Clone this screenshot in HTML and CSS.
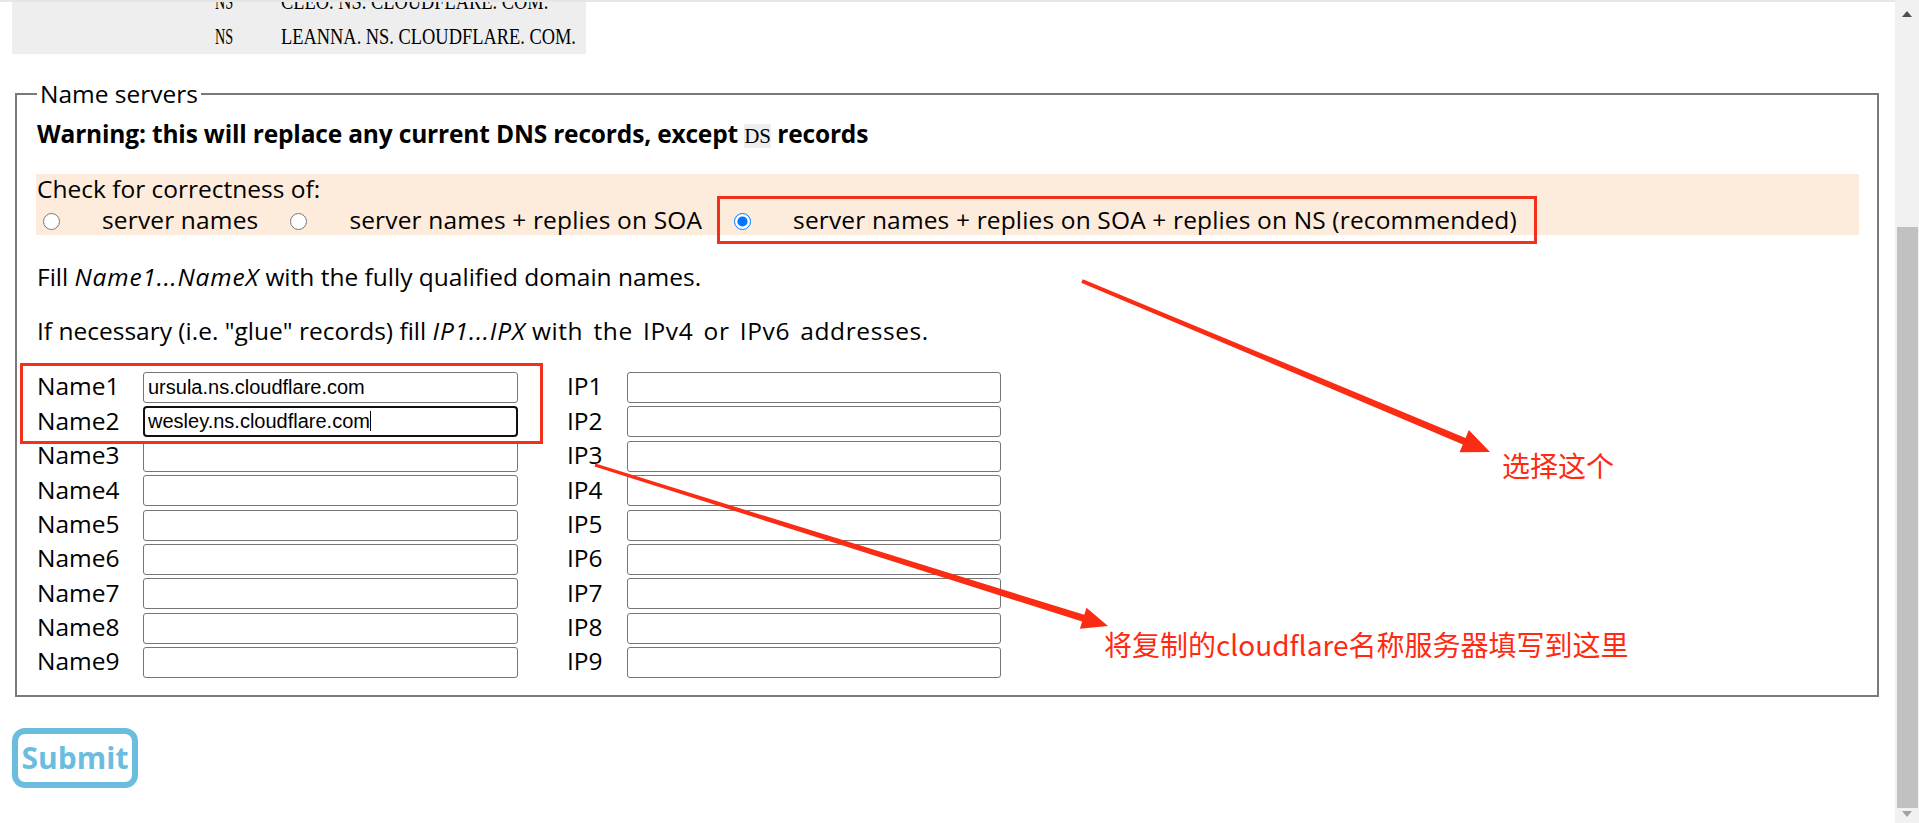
FILE: index.html
```html
<!DOCTYPE html>
<html lang="en">
<head>
<meta charset="utf-8">
<title>Name servers</title>
<link rel="stylesheet" href="styles.css">
</head>
<body>
<div class="topline"></div>
<div class="page">
  <div class="pre">
    <div class="pre-inner">
      <div class="pre-line"><span class="rr">NS</span><span class="rv">CLEO. NS. CLOUDFLARE. COM.</span></div>
      <div class="pre-line"><span class="rr">NS</span><span class="rv">LEANNA. NS. CLOUDFLARE. COM.</span></div>
    </div>
  </div>
  <form class="ns-form">
    <fieldset class="ns">
      <legend>Name servers</legend>
      <p class="warn">Warning: this will replace any current DNS records, except <code class="code">DS</code> records</p>
      <div class="check">
        <div>Check for correctness of:</div>
        <div class="radios">
          <input class="radio first" type="radio" name="check"><span>server names</span>
          <input class="radio" type="radio" name="check"><span>server names + replies on SOA</span>
          <input class="radio" type="radio" name="check" checked><span>server names + replies on SOA + replies on NS (recommended)</span>
        </div>
      </div>
      <p class="fill">Fill <em>Name1...NameX</em> with the fully qualified domain names.</p>
      <p class="glue">If necessary (i.e. "glue" records) fill <em>IP1...IPX</em> <span class="tail">with the IPv4 or IPv6 addresses.</span></p>
      <div class="rows">
        <div class="row"><span class="lbl">Name1</span><input class="field" value="ursula.ns.cloudflare.com"><span class="lbl ip">IP1</span><input class="field ipf"></div>
        <div class="row"><span class="lbl">Name2</span><input class="field focus" value="wesley.ns.cloudflare.com"><span class="lbl ip">IP2</span><input class="field ipf"></div>
        <div class="row"><span class="lbl">Name3</span><input class="field"><span class="lbl ip">IP3</span><input class="field ipf"></div>
        <div class="row"><span class="lbl">Name4</span><input class="field"><span class="lbl ip">IP4</span><input class="field ipf"></div>
        <div class="row"><span class="lbl">Name5</span><input class="field"><span class="lbl ip">IP5</span><input class="field ipf"></div>
        <div class="row"><span class="lbl">Name6</span><input class="field"><span class="lbl ip">IP6</span><input class="field ipf"></div>
        <div class="row"><span class="lbl">Name7</span><input class="field"><span class="lbl ip">IP7</span><input class="field ipf"></div>
        <div class="row"><span class="lbl">Name8</span><input class="field"><span class="lbl ip">IP8</span><input class="field ipf"></div>
        <div class="row"><span class="lbl">Name9</span><input class="field"><span class="lbl ip">IP9</span><input class="field ipf"></div>
      </div>
    </fieldset>
    <button class="submit" type="button">Submit</button>
  </form>
</div>

<div class="caret"></div>
<div class="redbox box1"></div>
<div class="redbox box2"></div>
<svg class="annot" width="1919" height="823" viewBox="0 0 1919 823" xmlns="http://www.w3.org/2000/svg">
  <polygon fill="#fb2c14" points="1082.8,279.2 1465.55,437.97 1468.84,430.12 1490,452 1459.56,452.28 1462.85,444.43 1081.2,282.8"/>
  <polygon fill="#fb2c14" points="595.45,463.57 1084.25,614.86 1086.49,607.71 1108,626 1079.91,628.69 1082.15,621.54 594.55,466.43"/>
</svg>
<div class="note note1">选择这个</div>
<div class="note note2">将复制的cloudflare名称服务器填写到这里</div>

<div class="scrollbar">
  <div class="sb-up"></div>
  <div class="sb-thumb"></div>
  <div class="sb-down"></div>
</div>
</body>
</html>
```

FILE: styles.css
```css
html, body {
  margin: 0;
  padding: 0;
}

body {
  position: relative;
  width: 1919px;
  height: 823px;
  overflow: hidden;
  background: #ffffff;
  color: #000000;
  font-family: "Open Sans", "Noto Sans", sans-serif;
  font-size: 24.5px;
  line-height: 30.5px;
}

.topline {
  position: fixed;
  top: 0;
  left: 0;
  right: 24px;
  height: 2px;
  background: #e6e6e6;
  z-index: 5;
}

/* dig output block (scrolled partly out of view) */
.pre {
  margin-left: 12px;
  width: 574px;
  height: 54px;
  overflow: hidden;
  background: #eeeeee;
}

.pre-inner {
  margin-top: -16px;
  font-family: "Liberation Serif", serif;
  font-size: 23px;
  line-height: 35px;
}

.pre-line {
  display: flex;
  padding-left: 203px;
  white-space: pre;
}

.rr {
  flex: none;
  width: 66px;
  display: inline-block;
  transform: scaleX(0.62);
  transform-origin: left center;
}

.rv {
  flex: none;
  display: inline-block;
  transform: scaleX(0.8);
  transform-origin: left center;
}

/* fieldset */
.ns {
  margin: 24.75px 40px 0 15px;
  padding: 10px 18px 17px 20px;
  border: 2px solid #7a7a7a;
  min-width: 0;
}

.ns legend {
  padding: 0 3px;
  line-height: 30.5px;
}

.warn {
  margin: 0 0 22.6px;
  font-weight: 700;
  letter-spacing: -0.17px;
}

.code {
  font-family: "Liberation Serif", serif;
  font-weight: 400;
  font-size: 21px;
  letter-spacing: 0;
  background: #eeeeee;
}

.check {
  margin-left: -1px;
  padding-left: 1px;
  background: #fdebdc;
}

.radios {
  display: flex;
  align-items: center;
  white-space: nowrap;
  letter-spacing: 0.15px;
}

.radio {
  width: 17px;
  height: 17px;
  margin: 2px 42px 0 32px;
  accent-color: #0075ff;
}

.radio.first {
  margin-left: 6px;
}

.fill,
.glue {
  white-space: nowrap;
}

.fill em,
.glue em {
  letter-spacing: 0.8px;
}

.fill {
  margin: 26.25px 0 0;
}

.glue {
  margin: 24px 0 0;
}

.tail {
  letter-spacing: 0.6px;
  word-spacing: 3.3px;
}

.rows {
  margin-top: 25.5px;
  display: flex;
  flex-direction: column;
  gap: 3.4px;
}

.row {
  display: flex;
  align-items: center;
  height: 31px;
}

.lbl {
  width: 106px;
  flex: none;
  margin-top: -2px;
}

.lbl.ip {
  width: 60px;
  margin-left: 49px;
}

.field {
  box-sizing: border-box;
  flex: none;
  width: 375px;
  height: 31px;
  margin: 0;
  padding: 0 4px;
  border: 1px solid #767676;
  border-radius: 3px;
  background: #ffffff;
  color: #000000;
  font-family: "Liberation Sans", Arial, sans-serif;
  font-size: 20px;
  outline: none;
}

.field.ipf {
  width: 374px;
}

.field.focus {
  border: 2px solid #101010;
  border-radius: 4px;
  padding: 0 3px;
}

.submit {
  display: block;
  box-sizing: border-box;
  margin: 30.8px 0 0 12px;
  width: 126px;
  height: 60px;
  padding: 0;
  border: 6.5px solid #6bbde0;
  border-radius: 13px;
  background: #ffffff;
  color: #6bbde0;
  font-family: "Open Sans", sans-serif;
  font-weight: 700;
  font-size: 30px;
  line-height: 1;
}

/* annotations */
.caret {
  position: absolute;
  left: 370px;
  top: 411px;
  width: 1px;
  height: 20px;
  background: #000000;
}

.redbox {
  position: absolute;
  box-sizing: border-box;
  border: 3px solid #f2301b;
}

.box1 {
  left: 717px;
  top: 196px;
  width: 820px;
  height: 48px;
}

.box2 {
  left: 20px;
  top: 363px;
  width: 523px;
  height: 81px;
}

.annot {
  position: absolute;
  left: 0;
  top: 0;
  pointer-events: none;
}

.note {
  position: absolute;
  font-family: "Noto Sans CJK SC", sans-serif;
  font-size: 28px;
  color: #ff2a12;
  white-space: nowrap;
  line-height: 30px;
}

.note1 {
  left: 1502px;
  top: 450px;
}

.note2 {
  left: 1104px;
  top: 629px;
}

/* window scrollbar */
.scrollbar {
  position: fixed;
  top: 0;
  right: 0;
  width: 24px;
  height: 823px;
  background: #f1f1f1;
  z-index: 6;
}

.sb-thumb {
  position: absolute;
  left: 2px;
  right: 1px;
  top: 227px;
  height: 581px;
  background: #c1c1c1;
}

.sb-up {
  position: absolute;
  left: 7px;
  top: 11px;
  width: 0;
  height: 0;
  border-left: 5.5px solid transparent;
  border-right: 5.5px solid transparent;
  border-bottom: 6px solid #505050;
}

.sb-down {
  position: absolute;
  left: 7px;
  top: 811px;
  width: 0;
  height: 0;
  border-left: 5.5px solid transparent;
  border-right: 5.5px solid transparent;
  border-top: 6px solid #a3a3a3;
}
```
